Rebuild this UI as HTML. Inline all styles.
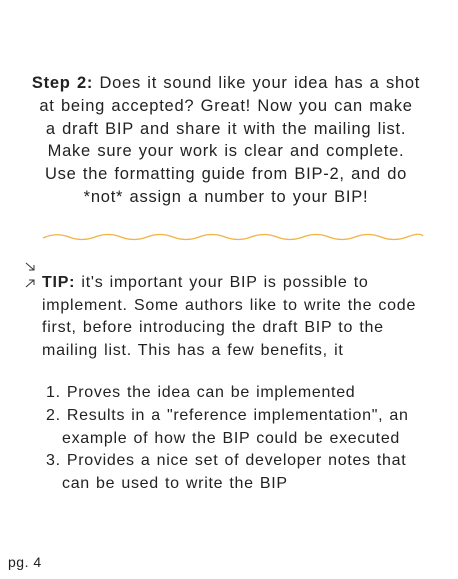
<!DOCTYPE html>
<html><head><meta charset="utf-8"><style>
body{margin:0;width:458px;height:579px;background:#fff;position:relative;overflow:hidden;font-family:"Liberation Sans",sans-serif;color:#222;}
.s{position:absolute;left:0;width:452px;top:72px;text-align:center;font-size:16.5px;line-height:22.8px;letter-spacing:0.75px;word-spacing:1px;white-space:nowrap;}
.t{position:absolute;left:42px;top:272px;font-size:16px;line-height:22.5px;letter-spacing:0.75px;word-spacing:1px;white-space:nowrap;}
.l{position:absolute;left:46px;top:382px;font-size:16px;line-height:22.8px;letter-spacing:0.7px;word-spacing:1px;white-space:nowrap;}
.i{padding-left:16px;}
b{font-weight:bold;}
.pg{position:absolute;left:8px;top:554px;font-size:14px;letter-spacing:0.5px;}
</style></head><body>
<div class="s"><b>Step 2:</b> Does it sound like your idea has a shot<br>at being accepted? Great! Now you can make<br>a draft BIP and share it with the mailing list.<br>Make sure your work is clear and complete.<br>Use the formatting guide from BIP-2, and do<br>*not* assign a number to your BIP!</div>
<svg style="position:absolute;left:0;top:228px" width="458" height="20"><path d="M43 10 Q56 4 69 9 T95 9 T121 9 T147 9 T173 9 T199 9 T225 9 T251 9 T277 9 T303 9 T329 9 T355 9 T381 9 T407 9 T423 8" fill="none" stroke="#f2b344" stroke-width="1.3"/></svg>
<svg style="position:absolute;left:24px;top:260px" width="16" height="30" fill="none" stroke="#333" stroke-width="1"><path d="M2 3 L10 10 M10 5 V10 H5"/><path d="M2 27 L10 20 M5 20 H10 V25"/></svg>
<div class="t"><b>TIP:</b> it's important your BIP is possible to<br>implement. Some authors like to write the code<br>first, before introducing the draft BIP to the<br>mailing list. This has a few benefits, it</div>
<div class="l">1. Proves the idea can be implemented<br>2. Results in a "reference implementation", an<br><span class="i">example of how the BIP could be executed</span><br>3. Provides a nice set of developer notes that<br><span class="i">can be used to write the BIP</span></div>
<div class="pg">pg. 4</div>
</body></html>
